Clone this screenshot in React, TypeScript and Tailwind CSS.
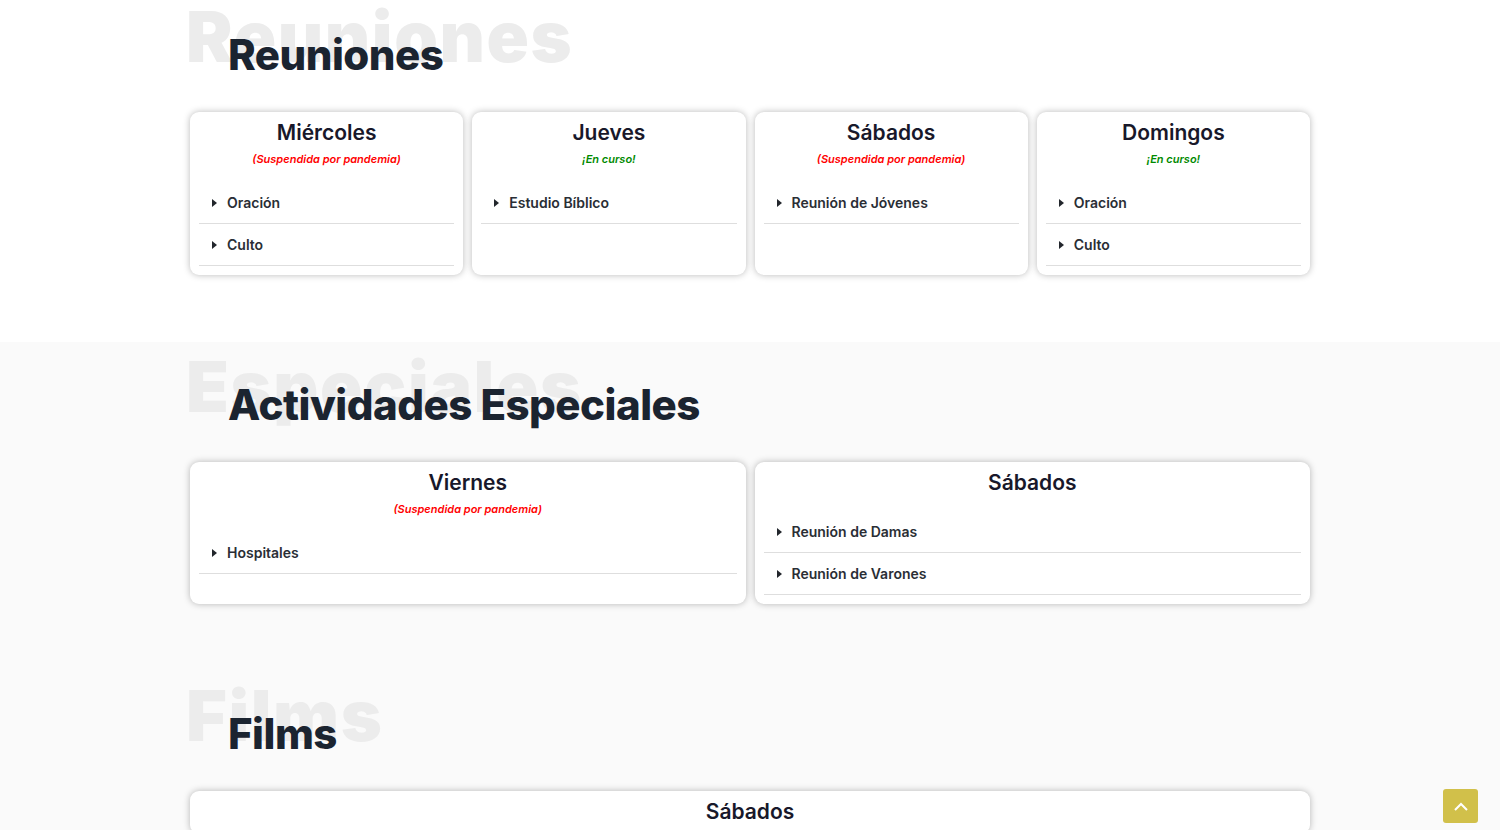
import React from "react";

type Status = "suspended" | "active" | undefined;

type Day = {
  title: string;
  status?: Status;
  items: string[];
};

const reuniones: Day[] = [
  { title: "Miércoles", status: "suspended", items: ["Oración", "Culto"] },
  { title: "Jueves", status: "active", items: ["Estudio Bíblico"] },
  { title: "Sábados", status: "suspended", items: ["Reunión de Jóvenes"] },
  { title: "Domingos", status: "active", items: ["Oración", "Culto"] },
];

const especiales: Day[] = [
  { title: "Viernes", status: "suspended", items: ["Hospitales"] },
  { title: "Sábados", items: ["Reunión de Damas", "Reunión de Varones"] },
];

const films: Day[] = [{ title: "Sábados", items: [] }];

function SectionTitle({ back, front }: { back: string; front: string }) {
  return (
    <div className="relative h-[110px]">
      <div className="absolute left-[-4px] top-0 text-[70px] leading-none font-black text-[#ececec] tracking-[1.6px] whitespace-nowrap select-none">
        {back}
      </div>
      <h2 className="relative pl-[38px] pt-[32px] text-[42px] leading-none font-extrabold text-[#1b2430] tracking-[-0.5px]">
        {front}
      </h2>
    </div>
  );
}

function DayCard({ day }: { day: Day }) {
  return (
    <div className="bg-white rounded-[9px] shadow-[0_0_7px_rgba(0,0,0,0.28)] pt-[8px] pb-[9px]">
      <h3 className="text-center text-[21px] leading-[26px] font-semibold text-[#18182a]">
        {day.title}
      </h3>

      {day.status && (
        <p
          className={
            day.status === "suspended"
              ? "mt-[5px] text-center text-[11px] leading-[16px] italic font-semibold text-[#ff0000]"
              : "mt-[5px] text-center text-[11px] leading-[16px] italic font-semibold text-[#008a00]"
          }
        >
          {day.status === "suspended" ? "(Suspendida por pandemia)" : "¡En curso!"}
        </p>
      )}

      {day.items.length > 0 && (
        <ul className="mt-[15px] mx-[9px]">
          {day.items.map((item) => (
            <li
              key={item}
              className="h-[42px] flex items-center border-b border-[#dedede] pl-[13px]"
            >
              <span className="w-0 h-0 border-y-[4px] border-y-transparent border-l-[5px] border-l-[#22262c] mr-[10px]" />
              <span className="text-[14px] font-semibold text-[#2a2e35]">{item}</span>
            </li>
          ))}
        </ul>
      )}
    </div>
  );
}

export default function App() {
  return (
    <div className="min-h-screen bg-[#fafafa] font-['Inter','Noto_Sans',sans-serif]">
      {/* Reuniones */}
      <section className="bg-white pt-[2px] pb-[67px]">
        <div className="w-[1120px] mx-auto">
          <SectionTitle back="Reuniones" front="Reuniones" />
          <div className="grid grid-cols-4 gap-[9px]">
            {reuniones.map((d) => (
              <DayCard key={d.title} day={d} />
            ))}
          </div>
        </div>
      </section>

      {/* Actividades especiales */}
      <section className="bg-[#fafafa] pt-[10px] pb-[67px]">
        <div className="w-[1120px] mx-auto">
          <SectionTitle back="Especiales" front="Actividades Especiales" />
          <div className="grid grid-cols-2 gap-[9px]">
            {especiales.map((d) => (
              <DayCard key={d.title} day={d} />
            ))}
          </div>
        </div>
      </section>

      {/* Films */}
      <section className="bg-[#fafafa] pt-[10px] pb-[67px]">
        <div className="w-[1120px] mx-auto">
          <SectionTitle back="Films" front="Films" />
          <div className="grid grid-cols-1">
            {films.map((d) => (
              <DayCard key={d.title} day={d} />
            ))}
          </div>
        </div>
      </section>

      <button className="fixed right-[22px] bottom-[7px] w-[35px] h-[34px] rounded-[3px] bg-[#d1c04a] flex items-center justify-center">
        <svg width="14" height="9" viewBox="0 0 14 9" fill="none">
          <path d="M1 8L7 2L13 8" stroke="white" strokeWidth="2" />
        </svg>
      </button>
    </div>
  );
}
